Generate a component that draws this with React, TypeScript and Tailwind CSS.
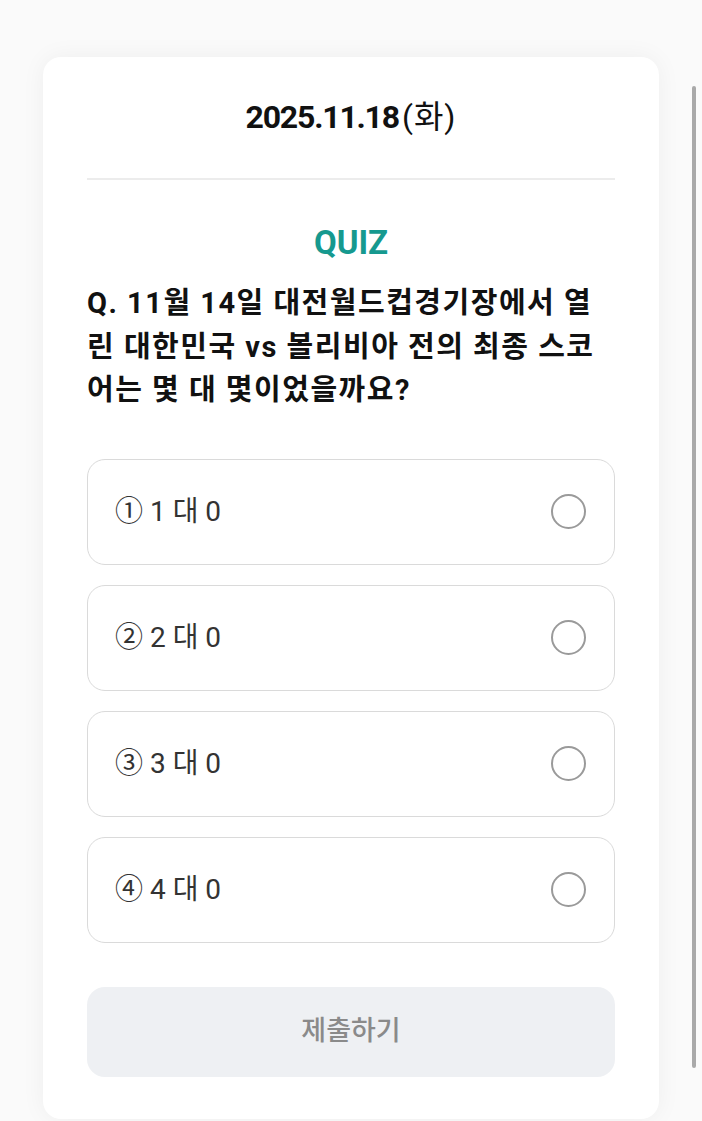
import { useState } from 'react';

const FONT = { fontFamily: 'Roboto, "Noto Sans CJK KR", "Noto Sans", sans-serif' };

const options = [
  { id: 1, mark: '①', label: '1 대 0' },
  { id: 2, mark: '②', label: '2 대 0' },
  { id: 3, mark: '③', label: '3 대 0' },
  { id: 4, mark: '④', label: '4 대 0' },
];

export default function App() {
  const [selected, setSelected] = useState<number | undefined>();

  return (
    <div className="relative min-h-[1121px] bg-[#fafafa] px-[43px] pt-[57px]" style={FONT}>
      {/* Card */}
      <div className="rounded-[18px] bg-white px-[44px] pb-[42px] pt-[42px] shadow-[0_0_24px_rgba(0,0,0,0.05)]">
        <p className="text-center text-[32px] font-bold leading-[36px] tracking-[-1.2px] text-[#111]">
          2025.11.18<span className="ml-[3px] font-normal tracking-[1px]">(화)</span>
        </p>

        <div className="mt-[43px] h-[2px] bg-[#ececec]" />

        <h2 className="mt-[43px] text-center text-[33px] font-bold leading-[40px] text-[#16998f]">
          QUIZ
        </h2>

        <p className="mt-[19px] break-all text-[29px] font-bold leading-[43.5px] tracking-[1.5px] text-[#111]">
          Q. 11월 14일 대전월드컵경기장에서 열린 대한민국 vs 볼리비아 전의 최종 스코어는 몇 대 몇이었을까요?
        </p>

        {/* 보기 */}
        <div className="mt-[46px] flex flex-col gap-[20px]">
          {options.map((o) => (
            <button
              key={o.id}
              onClick={() => setSelected(o.id)}
              className="flex h-[106px] items-center justify-between rounded-[18px] border-[1.5px] border-[#dadada] bg-white pl-[27px] pr-[28px] text-left"
            >
              <span className="text-[28px] leading-none text-[#333]">
                {o.mark} {o.label}
              </span>
              <span className="flex h-[35px] w-[35px] items-center justify-center rounded-full border-2 border-[#9a9a9a]">
                {selected === o.id && <span className="h-[17px] w-[17px] rounded-full bg-[#16998f]" />}
              </span>
            </button>
          ))}
        </div>

        <button
          disabled={!selected}
          className="mt-[44px] flex h-[90px] w-full items-center justify-center rounded-[18px] bg-[#eef0f3] text-[27px] font-medium text-[#8a8a8a]"
        >
          제출하기
        </button>
      </div>

      {/* scrollbar */}
      <div className="absolute right-[6px] top-[86px] h-[982px] w-[4px] rounded-full bg-[#a9a9a9]" />
    </div>
  );
}
